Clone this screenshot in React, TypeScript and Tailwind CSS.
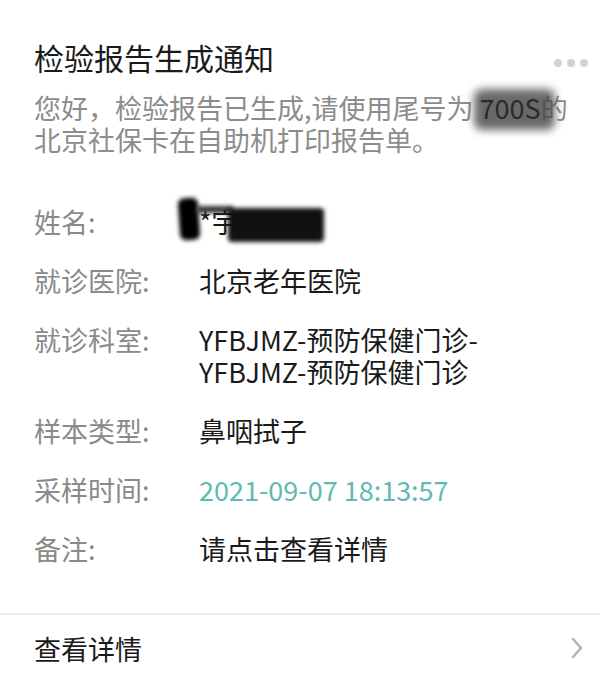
import React from "react";

const font = { fontFamily: '"Noto Sans CJK SC", "Noto Sans", sans-serif' };

const rows: { label: string; value: React.ReactNode }[] = [
  {
    label: "姓名:",
    value: (
      <span className="relative inline-block">
        <span className="absolute left-[-20px] top-[-8px] h-[42px] w-[20px] rounded-[6px] bg-black blur-[2px] -rotate-[4deg]" />
        <span className="absolute left-[-2px] top-[0px] h-[7px] w-[36px] bg-[#333] blur-[2px]" />
        <span className="relative">*宇</span>
        <span className="absolute left-[29px] top-[2px] h-[34px] w-[96px] rounded-[4px] bg-[#111] blur-[2px]" />
      </span>
    ),
  },
  { label: "就诊医院:", value: "北京老年医院" },
  {
    label: "就诊科室:",
    value: (
      <>
        YFBJMZ-预防保健门诊-
        <br />
        YFBJMZ-预防保健门诊
      </>
    ),
  },
  { label: "样本类型:", value: "鼻咽拭子" },
  { label: "采样时间:", value: <span className="text-[#5fb9b4]">2021-09-07 18:13:57</span> },
  { label: "备注:", value: "请点击查看详情" },
];

export default function App() {
  return (
    <div style={font} className="relative h-[692px] w-[600px] overflow-hidden bg-white">
      <div className="px-[34px] pt-[39px]">
        <div className="flex items-center justify-between">
          <h1 className="text-[30px] leading-[36px] text-[#1a1a1a]">检验报告生成通知</h1>
          <div className="mr-[-22px] mt-[12px] flex gap-[5px]">
            <span className="h-[8px] w-[8px] rounded-full bg-[#d2d2d2]" />
            <span className="h-[8px] w-[8px] rounded-full bg-[#d2d2d2]" />
            <span className="h-[8px] w-[8px] rounded-full bg-[#d2d2d2]" />
          </div>
        </div>
        <p className="mt-[17px] whitespace-nowrap text-[27px] leading-[32px] text-[#8c8c8c]">
          您好，检验报告已生成,请使用尾号为{" "}
          <span className="relative inline-block">
            <span className="absolute left-[-6px] right-[-14px] top-[-3px] bottom-[-6px] rounded-[8px] bg-[#444] opacity-80 blur-[4px]" />
            <span className="relative text-[#2a2a2a]">700S</span>
          </span>
          的
          <br />
          北京社保卡在自助机打印报告单。
        </p>
        <div className="mt-[50px] flex flex-col gap-[27px]">
          {rows.map((r) => (
            <div key={r.label} className="grid grid-cols-[165px_1fr] text-[27px] leading-[32px]">
              <div className="text-[#8a8a8a]">{r.label}</div>
              <div className="whitespace-nowrap text-[#1a1a1a]">{r.value}</div>
            </div>
          ))}
        </div>
      </div>
      <div className="mt-[48px] h-[2px] bg-[#ececec]" />
      <div className="flex items-center justify-between pl-[34px] pr-[17px] pt-[18px]">
        <span className="text-[27px] leading-[32px] text-[#1a1a1a]">查看详情</span>
        <svg width="12" height="22" viewBox="0 0 12 22" fill="none" className="mt-[-2px]">
          <polyline points="2,2 10,11 2,20" stroke="#b0b0b0" strokeWidth="2.4" strokeLinecap="round" strokeLinejoin="round" />
        </svg>
      </div>
    </div>
  );
}
